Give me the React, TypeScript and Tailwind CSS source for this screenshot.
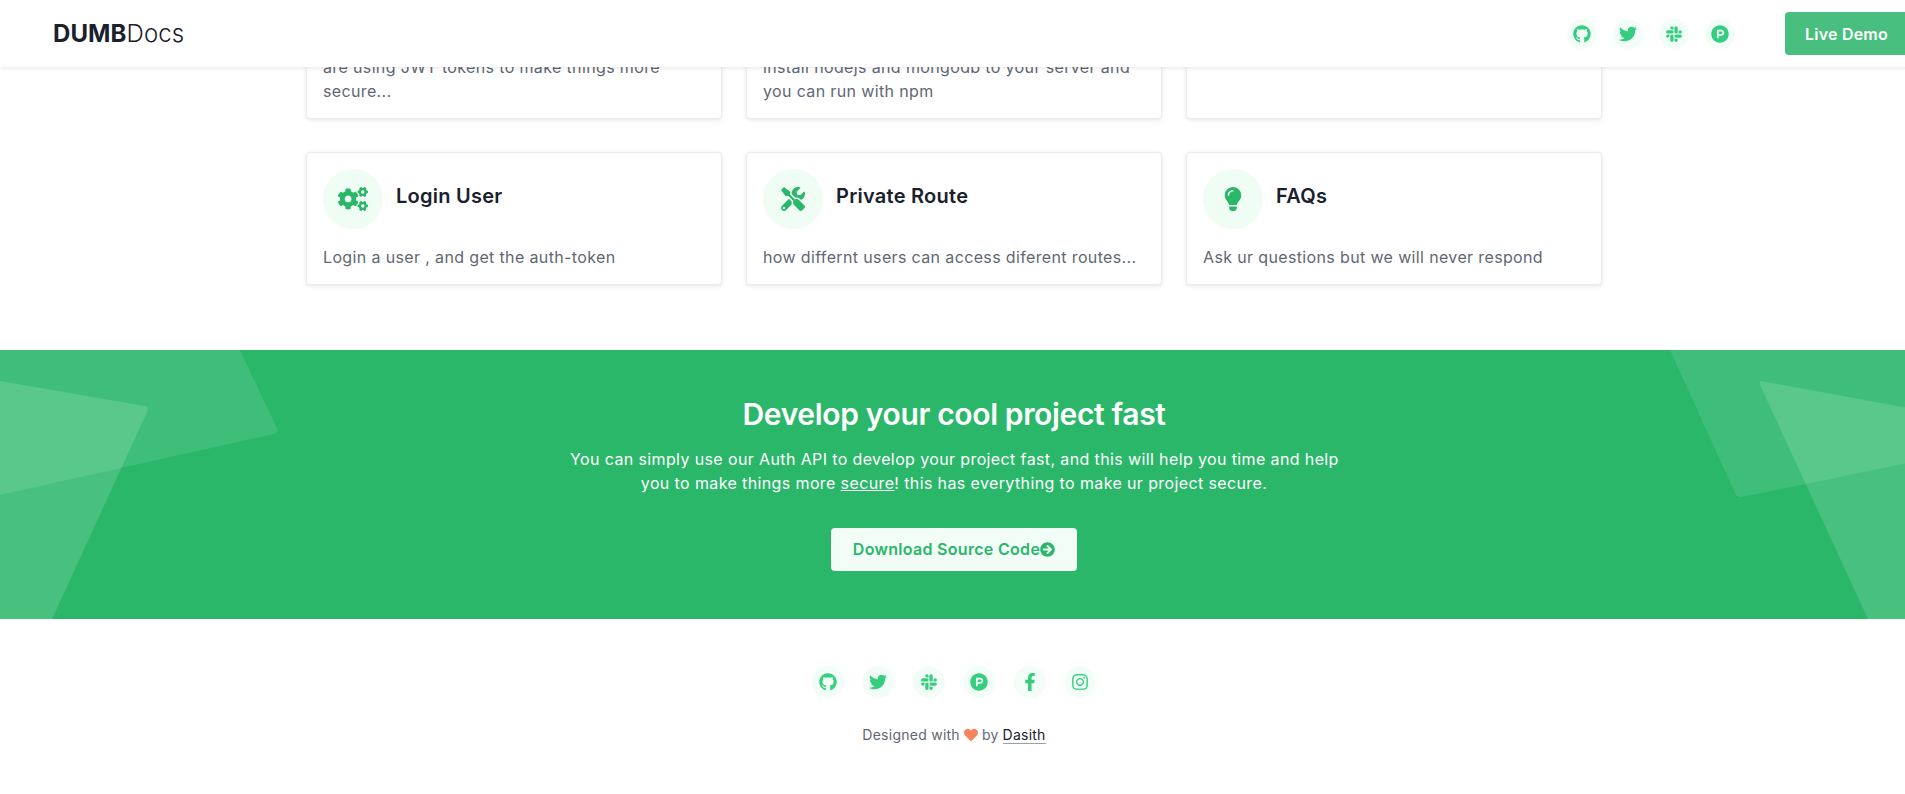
import type { ReactNode } from "react";
import {
  FaArrowCircleRight,
  FaCogs,
  FaFacebookF,
  FaGithub,
  FaHeart,
  FaInstagram,
  FaLightbulb,
  FaProductHunt,
  FaSlack,
  FaTools,
  FaTwitter,
} from "react-icons/fa";

const headerLinks = [FaGithub, FaTwitter, FaSlack, FaProductHunt];
const footerLinks = [FaGithub, FaTwitter, FaSlack, FaProductHunt, FaFacebookF, FaInstagram];

function Social({ icon: Icon, large }: { icon: typeof FaGithub; large?: boolean }) {
  return (
    <a
      className={`flex items-center justify-center rounded-full bg-[#f3fdf7] text-[18px] text-[#34ce7e] ${large ? "h-[32px] w-[32px]" : "h-[30px] w-[30px]"}`}
      href="#"
    >
      <Icon />
    </a>
  );
}

function Card({ icon, title, children }: { icon?: ReactNode; title?: string; children: ReactNode }) {
  return (
    <div className="rounded border border-[#e9ecf0] bg-white px-4 pt-4 pb-[15px] shadow-[0_1px_4px_rgba(0,0,0,0.1)]">
      <div className="flex h-[60px]">
        {icon && (
          <div className="flex h-[60px] w-[60px] items-center justify-center rounded-full bg-[#f0fdf4] text-[24px] text-[#2ab76a]">
            {icon}
          </div>
        )}
        {title && <h3 className="mt-[2px] ml-[13px] text-[20px] leading-[50px] font-semibold tracking-[0.25px] text-[#1a202c]">{title}</h3>}
      </div>
      <p className="mt-4 text-[16px] leading-6 tracking-[0.36px] text-[#5f6775]">{children}</p>
    </div>
  );
}

export default function App() {
  return (
    <div className="relative h-[794px] overflow-hidden bg-white font-['Inter',sans-serif]">
      <div className="w-[1908px]">
        <header className="absolute top-0 left-0 z-10 flex h-[67px] w-[1908px] items-center justify-between bg-white pl-[53px] shadow-[0_1px_4px_rgba(0,0,0,0.1)]">
          <a className="text-[24px] tracking-[0.1px] text-[#1a202c]" href="#">
            <span className="font-bold">DUMB</span>
            <span className="font-light">Docs</span>
          </a>
          <div className="flex items-center">
            <div className="flex gap-[16px]">
              {headerLinks.map((icon, i) => (
                <Social key={i} icon={icon} />
              ))}
            </div>
            <a className="my-[12px] ml-[50px] flex h-[43px] w-[123px] items-center justify-center rounded bg-[#48bf7e] text-[16px] font-semibold tracking-[0.2px] text-white" href="#">
              Live Demo
            </a>
          </div>
        </header>

        <main className="mx-auto -mt-[38px] grid w-[1296px] grid-cols-3 gap-x-[24px] gap-y-[33px]">
          <Card>are using JWT tokens to make things more secure...</Card>
          <Card>install nodejs and mongodb to your server and you can run with npm</Card>
          <Card>&nbsp;</Card>
          <Card icon={<FaCogs className="text-[30px]" />} title="Login User">
            Login a user , and get the auth-token
          </Card>
          <Card icon={<FaTools />} title="Private Route">
            how differnt users can access diferent routes...
          </Card>
          <Card icon={<FaLightbulb />} title="FAQs">
            Ask ur questions but we will never respond
          </Card>
        </main>

        <section className="relative mt-[65px] h-[269px] overflow-hidden bg-[#2ab76a] pt-[44px] text-center text-white">
          <svg className="absolute top-0 left-0" width="300" height="269" viewBox="0 0 300 269" fill="white">
            <path d="M0 -10H235L277 78Q279 83 274 84L0 145Z" fillOpacity="0.1" />
            <path d="M0 31L145 56Q149 57 148 60L52 269H0Z" fillOpacity="0.14" />
          </svg>
          <svg className="absolute top-0 left-[1650px]" width="258" height="269" viewBox="0 0 258 269" fill="white">
            <path d="M20 0L85 143Q87 148 92 147L258 113V-10H20Z" fillOpacity="0.1" />
            <path d="M111 31Q109 31 110 35L218 269H258V58Z" fillOpacity="0.14" />
          </svg>
          <div className="relative">
            <h2 className="text-[30px] leading-10 font-semibold tracking-[-0.35px]">Develop your cool project fast</h2>
            <p className="mx-auto mt-[13px] w-[768px] text-[16px] leading-6 tracking-[0.38px] whitespace-nowrap">
              You can simply use our Auth API to develop your project fast, and this will help you time and help
              <br />
              you to make things more <span className="underline">secure</span>! this has everything to make ur project secure.
            </p>
            <a className="mx-auto mt-[33px] flex h-[43px] w-[246px] items-center justify-center rounded bg-[#f3fdf7] pb-[1px] text-[16px] font-semibold tracking-[0.3px] text-[#2ab76a]" href="#">
              Download Source Code
              <FaArrowCircleRight className="text-[15px]" />
            </a>
          </div>
        </section>

        <footer className="flex flex-col items-center pt-[47px]">
          <div className="flex gap-[18.6px]">
            {footerLinks.map((icon, i) => (
              <Social key={i} icon={icon} large />
            ))}
          </div>
          <p className="mt-[27px] flex items-center gap-1 text-[14px] leading-5 tracking-[0.25px] text-[#5f6775]">
            Designed with
            <FaHeart className="text-[#f6845f]" />
            by
            <a className="border-b border-gray-400 leading-4 text-[#1a202c]" href="#">
              Dasith
            </a>
          </p>
        </footer>
      </div>
    </div>
  );
}
